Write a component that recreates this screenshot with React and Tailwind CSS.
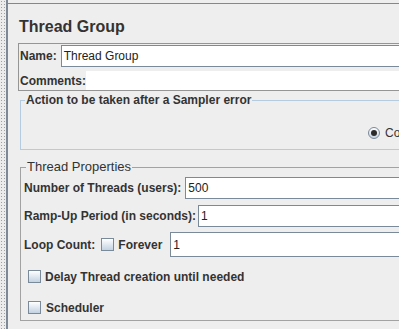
function CheckBox() {
  return (
    <span className="inline-block w-[13px] h-[13px] shrink-0 border border-[#7a8a99] bg-linear-to-b from-white to-[#c3d2e2]" />
  );
}

function Radio() {
  return (
    <span className="w-[12px] h-[12px] shrink-0 rounded-full border border-[#7a8a99] bg-linear-to-b from-white to-[#c3d2e2] flex items-center justify-center">
      <span className="w-[6px] h-[6px] rounded-full bg-[#2b2b2b]" />
    </span>
  );
}

function Field({ value, className = 'h-[22px]' }) {
  return (
    <div className={`flex-1 ${className} border border-[#7a8a99] bg-white pl-[2px] flex items-center text-[12px] font-normal text-[#222]`}>
      {value}
    </div>
  );
}

export default function App() {
  return (
    <div className="w-[399px] h-[329px] overflow-hidden flex bg-[#eeeeee] text-[#333] font-['Liberation_Sans',Arial,sans-serif]">
      <div className="w-[6px] h-full shrink-0 bg-[#ececec] bg-[image:radial-gradient(circle,#a0a0a0_0.7px,transparent_0.9px)] bg-[length:3px_3px]" />
      <div className="flex-1 min-w-0 h-full border-l-2 border-[#7d8996]">
        <div className="mt-[3px] w-[700px] border-t border-[#7d8996]">
          <h1 className="h-[39px] pt-[13px] pl-[11px] text-[16px] leading-[20px] font-bold">Thread Group</h1>

          <div className="ml-[10px] border-y border-l border-[#959595] text-[12px] font-bold">
            <div className="pt-px">
              <div className="h-[22px] flex items-center pl-[1px]">
                <span>Name:</span>
                <div className="ml-[4px] flex-1 flex">
                  <Field value="Thread Group" />
                </div>
              </div>
            </div>
            <div className="mt-[4px] h-[19px] flex items-center pl-[1px]">
              <span>Comments:</span>
              <div className="flex-1 self-stretch bg-white" />
            </div>
          </div>

          <fieldset className="ml-[12px] mt-[2px] w-[680px] border border-[#b4cbe2] text-[12px]">
            <legend className="ml-[4px] px-[1px] leading-[14px] font-bold">Action to be taken after a Sampler error</legend>
            <div className="h-[42px] pt-[17px]">
              <div className="ml-[347px] flex items-center gap-[5px]">
                <Radio />
                <span>Continue</span>
              </div>
            </div>
          </fieldset>

          <fieldset className="ml-[12px] mt-[10px] w-[680px] border border-[#a2a2a2] pl-[3px] pb-[6px] text-[12px] font-bold">
            <legend className="ml-[2px] px-[1px] leading-[14px] font-normal text-[13px]">Thread Properties</legend>
            <div className="mt-[3px] h-[22px] flex items-center">
              <span>Number of Threads (users):</span>
              <div className="ml-[4px] flex-1 flex">
                <Field value="500" />
              </div>
            </div>
            <div className="mt-[6px] h-[22px] flex items-center">
              <span>Ramp-Up Period (in seconds):</span>
              <div className="ml-[2px] flex-1 flex">
                <Field value="1" />
              </div>
            </div>
            <div className="mt-[5px] h-[25px] flex items-center">
              <span>Loop Count:</span>
              <span className="ml-[6px] flex"><CheckBox /></span>
              <span className="ml-[4px]">Forever</span>
              <div className="ml-[8px] flex-1 flex">
                <Field value="1" className="h-[25px]" />
              </div>
            </div>
            <div className="mt-[13px] h-[13px] flex items-center">
              <span className="ml-[4px] flex"><CheckBox /></span>
              <span className="ml-[4px]">Delay Thread creation until needed</span>
            </div>
            <div className="mt-[18px] h-[13px] flex items-center">
              <span className="ml-[4px] flex"><CheckBox /></span>
              <span className="ml-[5px]">Scheduler</span>
            </div>
          </fieldset>
        </div>
      </div>
    </div>
  );
}
